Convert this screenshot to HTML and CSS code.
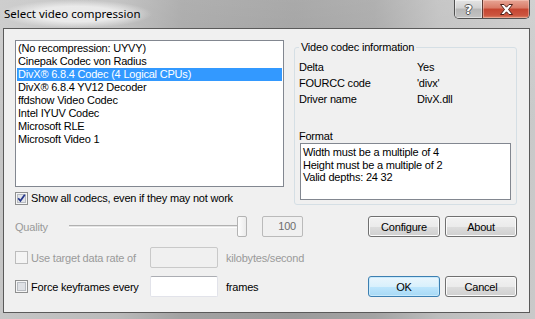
FILE: index.html
```html
<!DOCTYPE html>
<html lang="en">
<head>
    <meta charset="UTF-8">
    <meta name="viewport" content="width=device-width, initial-scale=1.0">
    <title>Select video compression</title>
    <link rel="stylesheet" href="styles.css">
</head>
<body>
    <div class="window">
        <div class="titlebar">
            <div class="title">Select video compression</div>
            <div class="caption">
                <div class="cap-btn cap-help">?</div>
                <div class="cap-btn cap-close">
                    <svg width="15" height="11" viewBox="0 0 15 11">
                        <path d="M1.5 0.5 H5 L7.5 3.2 L10 0.5 H13.5 L9.5 5.5 L13.5 10.5 H10 L7.5 7.8 L5 10.5 H1.5 L5.5 5.5 Z" fill="#fff" stroke="#4b2019" stroke-width="1" stroke-linejoin="round"/>
                    </svg>
                </div>
            </div>
        </div>

        <div class="client">
            <div class="top">
                <div class="left-col">
                    <div class="listbox">
                        <div class="item">(No recompression: UYVY)</div>
                        <div class="item">Cinepak Codec von Radius</div>
                        <div class="item selected">DivX® 6.8.4 Codec (4 Logical CPUs)</div>
                        <div class="item">DivX® 6.8.4 YV12 Decoder</div>
                        <div class="item">ffdshow Video Codec</div>
                        <div class="item">Intel IYUV Codec</div>
                        <div class="item">Microsoft RLE</div>
                        <div class="item">Microsoft Video 1</div>
                    </div>
                    <div class="check-row">
                        <svg class="cb" width="13" height="13" viewBox="0 0 13 13">
                            <rect x="0.5" y="0.5" width="12" height="12" fill="#f6f6f6" stroke="#8e8f8f"/>
                            <rect x="2.5" y="2.5" width="8" height="8" fill="#e2e4e8" stroke="#b8bcc2"/>
                            <path d="M3.2 6.3 L5.4 8.8 L9.8 2.8" fill="none" stroke="#25378c" stroke-width="1.7"/>
                        </svg>
                        <span>Show all codecs, even if they may not work</span>
                    </div>
                </div>

                <fieldset class="group">
                    <legend>Video codec information</legend>
                    <div class="info-row"><span class="info-key">Delta</span><span>Yes</span></div>
                    <div class="info-row"><span class="info-key">FOURCC code</span><span>'divx'</span></div>
                    <div class="info-row"><span class="info-key">Driver name</span><span>DivX.dll</span></div>
                    <div class="format-label">Format</div>
                    <div class="format-box">
                        <div>Width must be a multiple of 4</div>
                        <div>Height must be a multiple of 2</div>
                        <div>Valid depths: 24 32</div>
                    </div>
                </fieldset>
            </div>

            <div class="row row-quality">
                <div class="quality-label disabled">Quality</div>
                <div class="slider">
                    <div class="track"></div>
                    <div class="thumb"></div>
                </div>
                <div class="value-box">100</div>
                <div class="buttons">
                    <button class="btn">Configure</button>
                    <button class="btn">About</button>
                </div>
            </div>

            <div class="row row-target">
                <div class="check-label">
                    <svg class="cb" width="13" height="13" viewBox="0 0 13 13">
                        <rect x="0.5" y="0.5" width="12" height="12" fill="#f4f4f4" stroke="#bcbcbc"/>
                    </svg>
                    <span class="disabled">Use target data rate of</span>
                </div>
                <div class="edit edit-disabled"></div>
                <div class="unit disabled">kilobytes/second</div>
            </div>

            <div class="row row-keys">
                <div class="check-label">
                    <svg class="cb" width="13" height="13" viewBox="0 0 13 13">
                        <rect x="0.5" y="0.5" width="12" height="12" fill="#f6f6f6" stroke="#8e8f8f"/>
                        <rect x="2.5" y="2.5" width="8" height="8" fill="#dfe1e5" stroke="#b8bcc2"/>
                    </svg>
                    <span>Force keyframes every</span>
                </div>
                <div class="edit"></div>
                <div class="unit">frames</div>
                <div class="buttons">
                    <button class="btn btn-default">OK</button>
                    <button class="btn">Cancel</button>
                </div>
            </div>
        </div>
    </div>
</body>
</html>
```

FILE: styles.css
```css
* {
    box-sizing: border-box;
}
body {
    margin: 0;
    width: 535px;
    height: 319px;
    overflow: hidden;
    font-family: "Liberation Sans", Arial, sans-serif;
    font-size: 11px;
    letter-spacing: -0.2px;
    color: #000;
}

/* marco de la ventana */
.window {
    height: 319px;
    display: flex;
    flex-direction: column;
    background:
        linear-gradient(180deg, rgba(255, 255, 255, 0.15), rgba(0, 0, 0, 0) 40%),
        linear-gradient(90deg, #c6c6c6 0%, #bababa 22%, #a2a2a2 34%, #9b9b9b 55%, #a3a3a3 70%, #bdbdbd 82%, #c9c9c9 100%);
}
.titlebar {
    height: 28px;
    display: flex;
    justify-content: space-between;
    align-items: flex-start;
}
.title {
    height: 28px;
    padding: 6px 40px 0 4px;
    font-family: "Noto Sans", sans-serif;
    font-size: 11.5px;
    letter-spacing: 0;
    line-height: 16px;
    color: #000;
    background: radial-gradient(ellipse closest-side at 42% 50%, rgba(236, 236, 236, 0.95) 55%, rgba(236, 236, 236, 0) 100%);
}
.caption {
    display: flex;
    height: 19px;
    margin-right: 5px;
    border: 1px solid #505050;
    border-top: none;
    border-radius: 0 0 5px 5px;
    overflow: hidden;
}
.cap-btn {
    display: flex;
    justify-content: center;
    align-items: center;
    height: 18px;
}
.cap-help {
    width: 27px;
    font-family: "DejaVu Sans", sans-serif;
    font-weight: bold;
    font-size: 13px;
    letter-spacing: 0;
    color: #fff;
    text-shadow: 1px 0 0 #555, -1px 0 0 #555, 0 1px 0 #555, 0 -1px 0 #555;
    background: linear-gradient(180deg, #e4e4e4 0%, #d2d2d2 45%, #b6b6b6 50%, #c4c4c4 100%);
    box-shadow: inset 0 0 0 1px rgba(255, 255, 255, 0.45);
}
.cap-close {
    width: 47px;
    border-left: 1px solid #5e3a33;
    background: linear-gradient(180deg, #e7a595 0%, #d97a66 45%, #c54530 50%, #cc553f 85%, #de8a6c 100%);
    box-shadow: inset 0 0 0 1px rgba(255, 220, 210, 0.4);
}

/* area de cliente */
.client {
    height: 285px;
    margin: 0 5px 0 3px;
    border: 1px solid #5a5a5a;
    background: #f0f0f0;
    padding: 11px 12px 0 11px;
}
.top {
    display: flex;
    align-items: flex-start;
}
.left-col {
    width: 270px;
}
.listbox {
    height: 147px;
    border: 1px solid #828790;
    background: #fff;
    padding: 1px;
}
.item {
    height: 13px;
    line-height: 13px;
    padding-left: 1px;
    white-space: nowrap;
}
.item.selected {
    background: #3399ff;
    color: #fff;
}
.check-row {
    display: flex;
    align-items: center;
    gap: 3px;
    height: 14px;
    margin-top: 4px;
}
.cb {
    flex: none;
    display: block;
}

.group {
    margin: 1px 0 0 10px;
    width: 224px;
    height: 164px;
    padding: 5px 4px 0 4px;
    border: 1px solid #d5dfe5;
    border-radius: 3px;
    min-width: 0;
}
.group legend {
    padding: 0 2px;
    line-height: 13px;
}
.info-row {
    display: flex;
    line-height: 16px;
}
.info-key {
    width: 118px;
}
.format-label {
    margin-top: 23px;
    line-height: 13px;
}
.format-box {
    width: 211px;
    height: 57px;
    margin-left: 1px;
    border: 1px solid #828790;
    background: #fff;
    padding: 2px 2px;
    line-height: 12.5px;
}

/* filas inferiores */
.row {
    display: flex;
    align-items: center;
    height: 21px;
}
.row-quality {
    margin-top: 11px;
}
.row-target {
    margin-top: 10px;
}
.row-keys {
    margin-top: 8px;
}
.disabled {
    color: #9a9a9a;
}
.quality-label {
    width: 54px;
}
.slider {
    width: 178px;
    height: 21px;
    display: flex;
    align-items: center;
}
.track {
    flex: 1;
    height: 3px;
    margin-right: -2px;
    border-top: 1px solid #b1b1b1;
    border-bottom: 1px solid #fdfdfd;
    background: #e4e4e4;
}
.thumb {
    width: 10px;
    height: 21px;
    border: 1px solid #b3b3b3;
    border-radius: 2px;
    background: linear-gradient(90deg, #fdfdfd, #ebebeb);
}
.value-box {
    width: 41px;
    height: 21px;
    margin-left: 15px;
    padding-right: 6px;
    border: 1px solid #bababa;
    border-radius: 2px;
    background: #f0f0f0;
    text-align: right;
    line-height: 19px;
    color: #6d6d6d;
}
.buttons {
    margin-left: auto;
    display: flex;
    gap: 5px;
}
.btn {
    width: 72px;
    height: 21px;
    padding: 0;
    font-family: "Liberation Sans", Arial, sans-serif;
    font-size: 11px;
    letter-spacing: -0.2px;
    color: #000;
    border: 1px solid #707070;
    border-radius: 3px;
    background: linear-gradient(180deg, #f2f2f2 0%, #ebebeb 50%, #dddddd 50%, #cfcfcf 100%);
    box-shadow: inset 0 0 0 1px #fbfbfb;
}
.btn-default {
    border-color: #3c7fb1;
    background: linear-gradient(180deg, #eaf6fd 0%, #d9f0fc 50%, #bee6fd 50%, #a7d9f5 100%);
    box-shadow: inset 0 0 0 1px #c9eafc;
}
.check-label {
    width: 135px;
    display: flex;
    align-items: center;
    gap: 3px;
}
.edit {
    width: 68px;
    height: 21px;
    border: 1px solid #e2e3ea;
    border-top-color: #abadb3;
    border-radius: 2px;
    background: #fff;
}
.edit-disabled {
    border-color: #c9c9c9;
    background: #f0f0f0;
}
.unit {
    margin-left: 8px;
}
```
